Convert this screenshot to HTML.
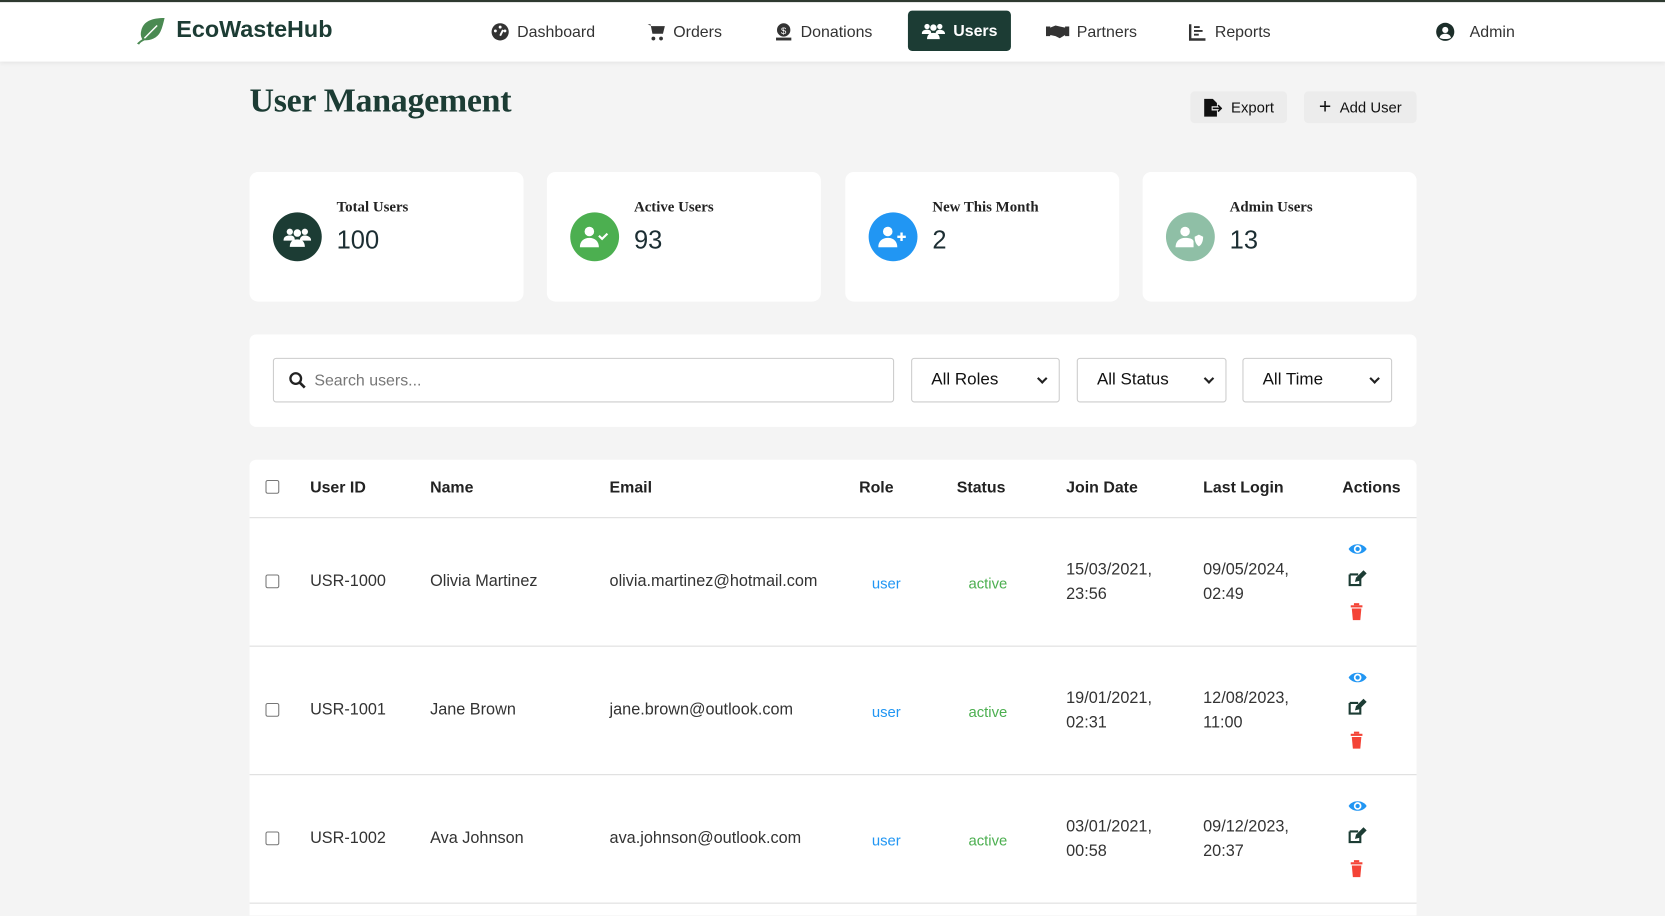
<!DOCTYPE html>
<html><head><meta charset="utf-8"><style>
*{box-sizing:border-box;margin:0;padding:0}
html,body{width:1665px;height:916px;overflow:hidden;background:#f4f4f4}
#w{width:1568px;height:862px;overflow:hidden;transform:scale(1.0619);transform-origin:0 0;position:relative;font-family:"Liberation Sans",sans-serif;color:#333}
.abs{position:absolute}
nav{position:absolute;left:0;top:0;width:1568px;height:58px;background:#fff;border-top:2px solid #2e3a30;box-shadow:0 2px 4px rgba(0,0,0,.06)}
.ni{position:absolute;top:19px;font-size:15px;color:#333;display:flex;align-items:center;gap:7px}
.ni svg{width:18px;height:18px}
.pill{position:absolute;left:855px;top:8px;width:97px;height:38px;background:#1c3c34;border-radius:4px;color:#fff;font-size:15px;font-weight:bold;display:flex;align-items:center;justify-content:center;gap:8px}
h1{position:absolute;left:235px;top:76px;font-family:"Liberation Serif",serif;font-size:32px;font-weight:bold;color:#1c3c34;letter-spacing:-.3px}
.btn{position:absolute;top:86px;height:30px;background:#ececec;border-radius:4px;font-size:14px;color:#111;display:flex;align-items:center;justify-content:center;gap:8px}
.card{position:absolute;top:162px;width:258px;height:122px;background:#fff;border-radius:8px}
.circ{position:absolute;left:22px;top:38px;width:46px;height:46px;border-radius:50%;display:flex;align-items:center;justify-content:center}
.lbl{position:absolute;left:82px;top:26px;font-family:"Liberation Serif",serif;font-weight:bold;font-size:14px;color:#222}
.num{position:absolute;left:82px;top:51px;font-size:24px;color:#1c2e33}
.panel{position:absolute;left:235px;top:315px;width:1099px;height:87px;background:#fff;border-radius:6px}
.inp{position:absolute;top:22px;height:42px;border:1px solid #ccc;border-radius:3px;background:#fff;font-size:16px;color:#111;display:flex;align-items:center;padding-left:18px}
.sel::after{content:"";position:absolute;right:12px;top:15px;width:5px;height:5px;border-right:2px solid #222;border-bottom:2px solid #222;transform:rotate(45deg)}
.tbl{position:absolute;left:235px;top:433px;width:1099px;height:440px;background:#fff;border-radius:6px}
.hd{position:absolute;top:18px;font-size:15px;font-weight:bold;color:#222}
.row{position:absolute;left:0;width:1099px;height:121px;border-top:1px solid #ddd}
.c{position:absolute;font-size:15.3px;color:#333}
.cb{position:absolute;left:15px;width:13px;height:13px;border:1px solid #767676;border-radius:2px;background:#fff}
</style></head><body><div id="w">
<nav>
 <div class="abs" style="left:128px;top:14px"><svg width="28" height="26" viewBox="0 0 28 26"><path d="M27 1C15 1 7 4 5 13c-1 4 0 6 1 8-3 2-5 4-5 4l2 1c1-2 3-3 5-4 6 0 12-2 15-8 2-4 3-9 4-13z" fill="#4a8a52"/><path d="M8 20c4-4 8-8 12-12" stroke="#fff" stroke-width="1.4" fill="none"/></svg></div>
 <div class="abs" style="left:166px;top:13px;font-size:22px;font-weight:bold;color:#1c3c34">EcoWasteHub</div>
 <div class="ni" style="left:462px"><svg viewBox="0 0 20 20"><circle cx="10" cy="10" r="9" fill="#333"/><circle cx="10" cy="5" r="1.5" fill="#fff"/><circle cx="5" cy="9" r="1.5" fill="#fff"/><circle cx="15" cy="9" r="1.5" fill="#fff"/><path d="M10 14l3-6" stroke="#fff" stroke-width="2"/></svg>Dashboard</div>
 <div class="ni" style="left:609px"><svg viewBox="0 0 20 20"><path d="M1 2h3l2 10h11l2-8H5" fill="#333"/><circle cx="7" cy="17" r="2" fill="#333"/><circle cx="15" cy="17" r="2" fill="#333"/></svg>Orders</div>
 <div class="ni" style="left:729px"><svg viewBox="0 0 20 20"><circle cx="10" cy="8" r="7" fill="#333"/><text x="10" y="12" font-size="10" fill="#fff" text-anchor="middle" font-family="Liberation Sans">$</text><rect x="2" y="16" width="16" height="3" fill="#333"/></svg>Donations</div>
 <div class="pill"><svg width="22" height="16" viewBox="0 0 22 16"><circle cx="5" cy="4" r="2.5" fill="#fff"/><circle cx="17" cy="4" r="2.5" fill="#fff"/><circle cx="11" cy="5" r="3" fill="#fff"/><path d="M0 11c0-3 2-4 5-4s4 1 4 4zM13 11c0-3 2-4 4-4s5 1 5 4zM5 16c0-4 2-6 6-6s6 2 6 6z" fill="#fff"/></svg>Users</div>
 <div class="ni" style="left:985px"><svg viewBox="0 0 22 18" style="width:22px"><path d="M0 4h4v9H0zM18 4h4v9h-4zM4 5l5-2 4 1 5 1v7l-5 3-4-2-5-1z" fill="#333"/></svg>Partners</div>
 <div class="ni" style="left:1119px"><svg viewBox="0 0 20 20"><path d="M2 2v16h16" stroke="#333" stroke-width="2.5" fill="none"/><path d="M6 5h6M6 9h9M6 13h5" stroke="#333" stroke-width="2"/></svg>Reports</div>
 <div class="ni" style="left:1352px;gap:14px"><svg viewBox="0 0 20 20"><circle cx="10" cy="10" r="9.5" fill="#1c2e2a"/><circle cx="10" cy="8" r="3.2" fill="#fff"/><path d="M4 16c1-3 3-4 6-4s5 1 6 4c-2 2-10 2-12 0z" fill="#fff"/></svg>Admin</div>
</nav>
<h1>User Management</h1>
<div class="btn" style="left:1121px;width:91px"><svg width="18" height="17" viewBox="0 0 18 17"><path d="M1 0h8l4 4v3H8v4h5v6H1z" fill="#111"/><path d="M9 9h7M14 6l3 3-3 3" stroke="#111" stroke-width="1.5" fill="none"/></svg>Export</div>
<div class="btn" style="left:1228px;width:106px"><span style="font-size:20px;line-height:1">+</span>Add User</div>

<div class="card" style="left:235px"><div class="circ" style="background:#1c3c34"><svg width="26" height="20" viewBox="0 0 22 16"><circle cx="5" cy="4" r="2.5" fill="#fff"/><circle cx="17" cy="4" r="2.5" fill="#fff"/><circle cx="11" cy="5" r="3" fill="#fff"/><path d="M0 11c0-3 2-4 5-4s4 1 4 4zM13 11c0-3 2-4 4-4s5 1 5 4zM5 16c0-4 2-6 6-6s6 2 6 6z" fill="#fff"/></svg></div><div class="lbl">Total Users</div><div class="num">100</div></div>
<div class="card" style="left:515px"><div class="circ" style="background:#4caf50"><svg width="28" height="20" viewBox="0 0 28 20"><circle cx="9" cy="5" r="4.5" fill="#fff"/><path d="M0 20c0-6 4-9 9-9s9 3 9 9z" fill="#fff"/><path d="M18 9l3 3 5-5" stroke="#fff" stroke-width="2" fill="none"/></svg></div><div class="lbl">Active Users</div><div class="num">93</div></div>
<div class="card" style="left:796px"><div class="circ" style="background:#2196f3"><svg width="28" height="20" viewBox="0 0 28 20"><circle cx="9" cy="5" r="4.5" fill="#fff"/><path d="M0 20c0-6 4-9 9-9s9 3 9 9z" fill="#fff"/><path d="M22 6v8M18 10h8" stroke="#fff" stroke-width="2.2"/></svg></div><div class="lbl">New This Month</div><div class="num">2</div></div>
<div class="card" style="left:1076px"><div class="circ" style="background:#8fbfa6"><svg width="28" height="20" viewBox="0 0 28 20"><circle cx="9" cy="5" r="4.5" fill="#fff"/><path d="M0 20c0-6 4-9 9-9s7 1 8 3v6z" fill="#fff"/><path d="M18 10l4-2 4 2c0 5-2 8-4 9-2-1-4-4-4-9z" fill="#fff"/></svg></div><div class="lbl">Admin Users</div><div class="num">13</div></div>

<div class="panel">
 <div class="inp" style="left:22px;width:585px;color:#777;font-size:15px;padding-left:14px"><svg width="16" height="16" viewBox="0 0 16 16" style="margin-right:8px"><circle cx="6.5" cy="6.5" r="5" stroke="#222" stroke-width="2.2" fill="none"/><path d="M10 10l5 5" stroke="#222" stroke-width="2.5"/></svg>Search users...</div>
 <div class="inp sel" style="left:623px;width:140px">All Roles</div>
 <div class="inp sel" style="left:779px;width:141px">All Status</div>
 <div class="inp sel" style="left:935px;width:141px">All Time</div>
</div>

<div class="tbl">
 <div class="cb" style="top:19px"></div>
 <div class="hd" style="left:57px">User ID</div><div class="hd" style="left:170px">Name</div><div class="hd" style="left:339px">Email</div><div class="hd" style="left:574px">Role</div><div class="hd" style="left:666px">Status</div><div class="hd" style="left:769px">Join Date</div><div class="hd" style="left:898px">Last Login</div><div class="hd" style="left:1029px">Actions</div>

 <div class="row" style="top:54px">
  <div class="cb" style="top:53px"></div>
  <div class="c" style="left:57px;top:51px">USR-1000</div><div class="c" style="left:170px;top:51px">Olivia Martinez</div><div class="c" style="left:339px;top:51px">olivia.martinez@hotmail.com</div>
  <div class="c" style="left:586px;top:53px;color:#2196f3;font-size:14px">user</div><div class="c" style="left:677px;top:53px;color:#4caf50;font-size:14px">active</div>
  <div class="c" style="left:769px;top:37px;line-height:23px">15/03/2021,<br>23:56</div><div class="c" style="left:898px;top:37px;line-height:23px">09/05/2024,<br>02:49</div>
 </div>
 <div class="row" style="top:175px">
  <div class="cb" style="top:53px"></div>
  <div class="c" style="left:57px;top:51px">USR-1001</div><div class="c" style="left:170px;top:51px">Jane Brown</div><div class="c" style="left:339px;top:51px">jane.brown@outlook.com</div>
  <div class="c" style="left:586px;top:53px;color:#2196f3;font-size:14px">user</div><div class="c" style="left:677px;top:53px;color:#4caf50;font-size:14px">active</div>
  <div class="c" style="left:769px;top:37px;line-height:23px">19/01/2021,<br>02:31</div><div class="c" style="left:898px;top:37px;line-height:23px">12/08/2023,<br>11:00</div>
 </div>
 <div class="row" style="top:296px">
  <div class="cb" style="top:53px"></div>
  <div class="c" style="left:57px;top:51px">USR-1002</div><div class="c" style="left:170px;top:51px">Ava Johnson</div><div class="c" style="left:339px;top:51px">ava.johnson@outlook.com</div>
  <div class="c" style="left:586px;top:53px;color:#2196f3;font-size:14px">user</div><div class="c" style="left:677px;top:53px;color:#4caf50;font-size:14px">active</div>
  <div class="c" style="left:769px;top:37px;line-height:23px">03/01/2021,<br>00:58</div><div class="c" style="left:898px;top:37px;line-height:23px">09/12/2023,<br>20:37</div>
 </div>
 <div class="row" style="top:417px"></div>
</div>
<svg class="abs" style="left:1268px;top:508px" width="24" height="330" viewBox="0 0 24 330">
 <defs><g id="ic">
  <path d="M2 9c3.5-6 13.5-6 17 0-3.5 6-13.5 6-17 0z" fill="#2196f3"/><circle cx="10.5" cy="9" r="3.6" fill="#fff"/><circle cx="10.5" cy="9" r="2" fill="#2196f3"/>
  <path d="M3 33h8M3 33v10h10v-6" stroke="#1c3c34" stroke-width="2" fill="none"/><path d="M8 40l1-4 7-7 3 3-7 7z" fill="#1c3c34"/>
  <rect x="4" y="62" width="11" height="2" fill="#f44336"/><rect x="7" y="60" width="5" height="2" fill="#f44336"/><path d="M5 65h9l-1 11H6z" fill="#f44336"/>
 </g></defs>
 <use href="#ic"/><use href="#ic" y="121"/><use href="#ic" y="242"/>
</svg>
</div></body></html>
